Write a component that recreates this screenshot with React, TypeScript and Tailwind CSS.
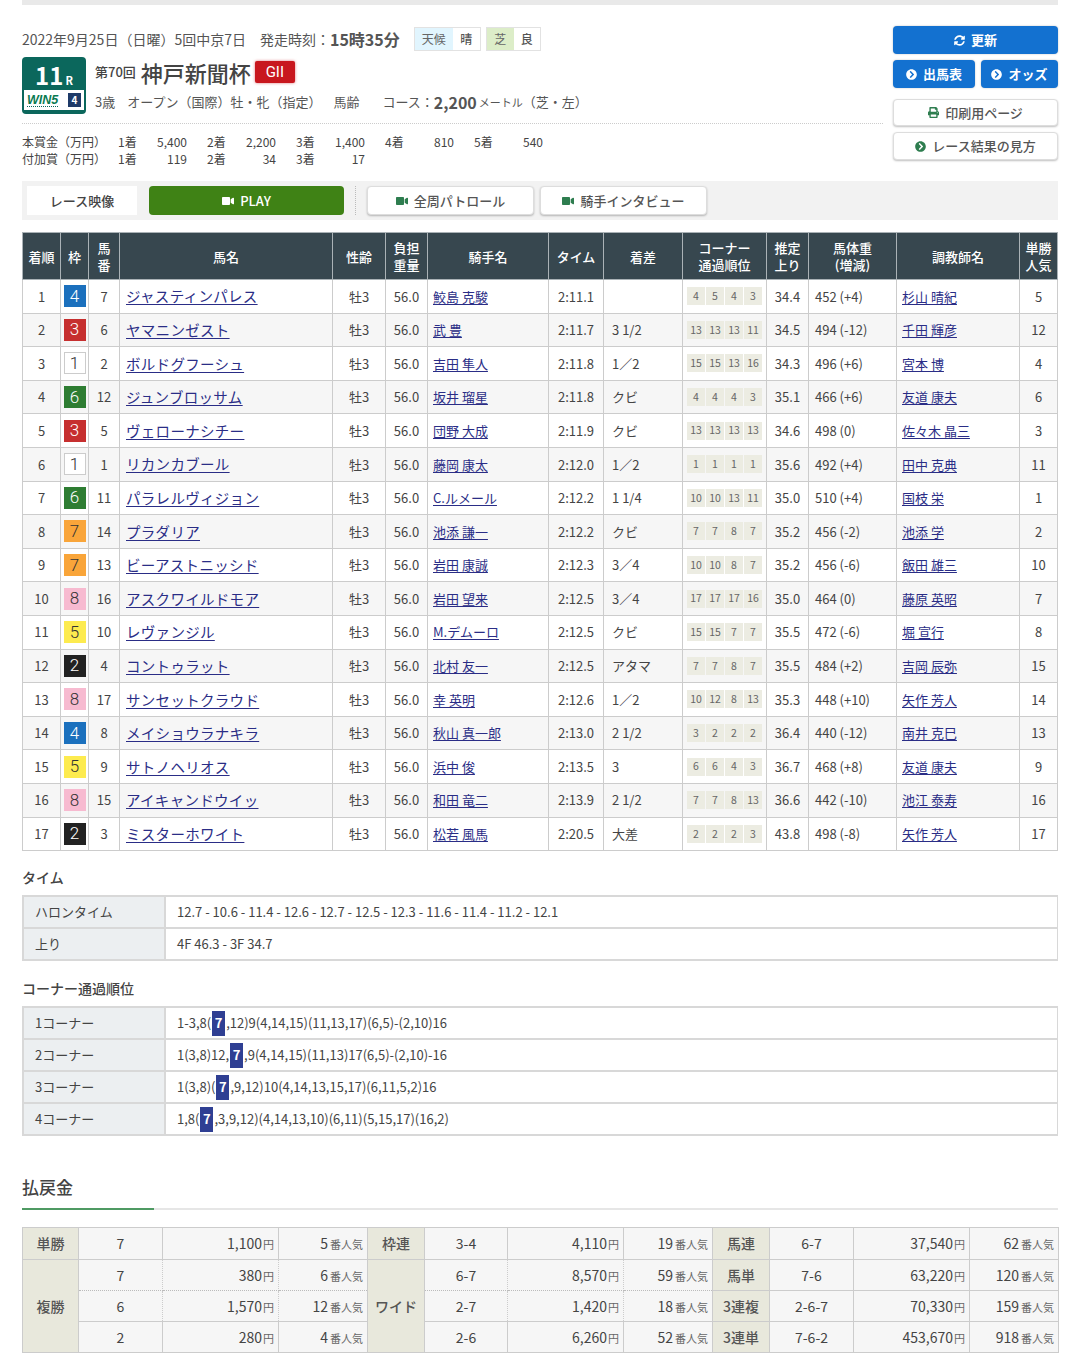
import React from "react";
import { FaVideo, FaSyncAlt, FaChevronCircleRight, FaPrint } from "react-icons/fa";

const FRAME: Record<number, string> = {
  1: "bg-white text-[#333] border border-[#ccc]",
  2: "bg-[#222] text-white",
  3: "bg-[#c62f2f] text-white",
  4: "bg-[#1b70bd] text-white",
  5: "bg-[#fdeb4f] text-[#333]",
  6: "bg-[#2e7d32] text-white",
  7: "bg-[#f9a53a] text-[#333]",
  8: "bg-[#f7bad0] text-[#333]",
};

type Row = [number, number, string, string, string, string, string, string, string, string, string];
const rows: Row[] = [
  [4, 7, "ジャスティンパレス", "鮫島 克駿", "2:11.1", "", "4 5 4 3", "34.4", "452 (+4)", "杉山 晴紀", "5"],
  [3, 6, "ヤマニンゼスト", "武 豊", "2:11.7", "3 1/2", "13 13 13 11", "34.5", "494 (-12)", "千田 輝彦", "12"],
  [1, 2, "ボルドグフーシュ", "吉田 隼人", "2:11.8", "1／2", "15 15 13 16", "34.3", "496 (+6)", "宮本 博", "4"],
  [6, 12, "ジュンブロッサム", "坂井 瑠星", "2:11.8", "クビ", "4 4 4 3", "35.1", "466 (+6)", "友道 康夫", "6"],
  [3, 5, "ヴェローナシチー", "団野 大成", "2:11.9", "クビ", "13 13 13 13", "34.6", "498 (0)", "佐々木 晶三", "3"],
  [1, 1, "リカンカブール", "藤岡 康太", "2:12.0", "1／2", "1 1 1 1", "35.6", "492 (+4)", "田中 克典", "11"],
  [6, 11, "パラレルヴィジョン", "C.ルメール", "2:12.2", "1 1/4", "10 10 13 11", "35.0", "510 (+4)", "国枝 栄", "1"],
  [7, 14, "プラダリア", "池添 謙一", "2:12.2", "クビ", "7 7 8 7", "35.2", "456 (-2)", "池添 学", "2"],
  [7, 13, "ビーアストニッシド", "岩田 康誠", "2:12.3", "3／4", "10 10 8 7", "35.2", "456 (-6)", "飯田 雄三", "10"],
  [8, 16, "アスクワイルドモア", "岩田 望来", "2:12.5", "3／4", "17 17 17 16", "35.0", "464 (0)", "藤原 英昭", "7"],
  [5, 10, "レヴァンジル", "M.デムーロ", "2:12.5", "クビ", "15 15 7 7", "35.5", "472 (-6)", "堀 宣行", "8"],
  [2, 4, "コントゥラット", "北村 友一", "2:12.5", "アタマ", "7 7 8 7", "35.5", "484 (+2)", "吉岡 辰弥", "15"],
  [8, 17, "サンセットクラウド", "幸 英明", "2:12.6", "1／2", "10 12 8 13", "35.3", "448 (+10)", "矢作 芳人", "14"],
  [4, 8, "メイショウラナキラ", "秋山 真一郎", "2:13.0", "2 1/2", "3 2 2 2", "36.4", "440 (-12)", "南井 克巳", "13"],
  [5, 9, "サトノヘリオス", "浜中 俊", "2:13.5", "3", "6 6 4 3", "36.7", "468 (+8)", "友道 康夫", "9"],
  [8, 15, "アイキャンドウイッ", "和田 竜二", "2:13.9", "2 1/2", "7 7 8 13", "36.6", "442 (-10)", "池江 泰寿", "16"],
  [2, 3, "ミスターホワイト", "松若 風馬", "2:20.5", "大差", "2 2 2 3", "43.8", "498 (-8)", "矢作 芳人", "17"],
];

const widths = [38, 28, 31, 213, 53, 42, 121, 55, 79, 84, 42, 88, 123, 38];
const heads = ["着順", "枠", "馬\n番", "馬名", "性齢", "負担\n重量", "騎手名", "タイム", "着差", "コーナー\n通過順位", "推定\n上り", "馬体重\n(増減)", "調教師名", "単勝\n人気"];

function Td({ className = "", children }: { className?: string; children?: React.ReactNode }) {
  return <td className={"border border-[#ccc] p-0 align-middle " + className}>{children}</td>;
}

function ResultTable() {
  return (
    <table className="w-[1036px] table-fixed border-collapse text-[13px] text-[#444]">
      <colgroup>
        {widths.map((w, i) => (
          <col key={i} style={{ width: w }} />
        ))}
      </colgroup>
      <thead>
        <tr className="h-[47px]">
          {heads.map((h, i) => (
            <th key={i} className="whitespace-pre-line border border-[#aab2b6] bg-[#37474f] p-0 text-center text-[13px] font-medium leading-[17px] text-white">
              {h}
            </th>
          ))}
        </tr>
      </thead>
      <tbody>
        {rows.map((r, i) => (
          <tr key={i} className={"h-[33.6px] " + (i % 2 ? "bg-[#f6f6f6]" : "bg-white")}>
            <Td className="text-center">{i + 1}</Td>
            <Td>
              <div className={"mx-auto flex h-[22px] w-[22px] items-center justify-center font-['Roboto',sans-serif] text-[17px] font-light leading-none " + FRAME[r[0]]}>{r[0]}</div>
            </Td>
            <Td className="text-center">{r[1]}</Td>
            <Td className="pl-[6px] text-[14.5px] tracking-[0.3px]">
              <a className="text-[#2a2d86] underline underline-offset-2">{r[2]}</a>
            </Td>
            <Td className="text-center">牡3</Td>
            <Td className="text-center">56.0</Td>
            <Td className="pl-[5px]">
              <a className="text-[#2a2d86] underline underline-offset-2">{r[3]}</a>
            </Td>
            <Td className="text-center">{r[4]}</Td>
            <Td className="pl-[8px]">{r[5]}</Td>
            <Td>
              <div className="flex justify-center gap-[1px]">
                {r[6].split(" ").map((c, j) => (
                  <span key={j} className="flex h-[18px] w-[18px] items-center justify-center bg-[#ecece2] text-[10.5px] leading-none text-[#666]">
                    {c}
                  </span>
                ))}
              </div>
            </Td>
            <Td className="text-center">{r[7]}</Td>
            <Td className="pl-[6px]">{r[8]}</Td>
            <Td className="pl-[5px]">
              <a className="text-[#2a2d86] underline underline-offset-2">{r[9]}</a>
            </Td>
            <Td className="text-center">{r[10]}</Td>
          </tr>
        ))}
      </tbody>
    </table>
  );
}

function InfoRow({ label, h = "h-[32px]", children }: { label: string; h?: string; children: React.ReactNode }) {
  return (
    <div className={"flex border-b-2 border-[#d8d8d8] text-[13px] text-[#444] " + h}>
      <div className="flex w-[144px] shrink-0 items-center border-l-2 border-r-2 border-l-[#d8d8d8] border-r-[#d8d8d8] bg-[#eceff1] pl-[11px]">{label}</div>
      <div className="flex flex-1 items-center border-r border-[#d8d8d8] pl-[11px]">{children}</div>
    </div>
  );
}

function Corner({ a, b }: { a: string; b: string }) {
  return (
    <>
      <span>{a}</span>
      <span className="mx-[1px] flex h-[25px] w-[13px] items-center justify-center bg-[#2f3f93] font-bold text-white">7</span>
      <span>{b}</span>
    </>
  );
}

function Yen({ v }: { v: string }) {
  return (
    <>
      {v}
      <span className="ml-[1px] text-[11px] text-[#666]">円</span>
    </>
  );
}
function Pop({ v }: { v: string }) {
  return (
    <>
      {v}
      <span className="ml-[2px] text-[11px] text-[#666]">番人気</span>
    </>
  );
}

const payWidths = [56, 84, 116, 89, 57, 83, 116, 89, 57, 84, 116, 89];

function PayLabel({ children, rowSpan }: { children: React.ReactNode; rowSpan?: number }) {
  return (
    <td rowSpan={rowSpan} className="border border-[#ccc] bg-[#e8e8dc] p-0 text-center text-[14px] font-medium text-[#555]">
      {children}
    </td>
  );
}
function PayCells({ c, y, p, dashed }: { c: string; y: string; p: string; dashed?: boolean }) {
  const b = "border-x border-x-[#ccc] p-0 " + (dashed ? "border-b border-b-[#bbb] border-dotted border-x-solid " : "border-y border-y-[#ccc] ");
  return (
    <>
      <td className={b + "text-center"}>{c}</td>
      <td className={b + "pr-[4px] text-right"}>
        <Yen v={y} />
      </td>
      <td className={b + "pr-[4px] text-right"}>
        <Pop v={p} />
      </td>
    </>
  );
}

function PayTable() {
  return (
    <table className="w-[1036px] table-fixed border-collapse bg-[#f6f6f6] text-[14px] text-[#444]">
      <colgroup>
        {payWidths.map((w, i) => (
          <col key={i} style={{ width: w }} />
        ))}
      </colgroup>
      <tbody>
        <tr className="h-[32px]">
          <PayLabel>単勝</PayLabel>
          <PayCells c="7" y="1,100" p="5" />
          <PayLabel>枠連</PayLabel>
          <PayCells c="3-4" y="4,110" p="19" />
          <PayLabel>馬連</PayLabel>
          <PayCells c="6-7" y="37,540" p="62" />
        </tr>
        <tr className="h-[31px]">
          <PayLabel rowSpan={3}>複勝</PayLabel>
          <PayCells c="7" y="380" p="6" dashed />
          <PayLabel rowSpan={3}>ワイド</PayLabel>
          <PayCells c="6-7" y="8,570" p="59" dashed />
          <PayLabel>馬単</PayLabel>
          <PayCells c="7-6" y="63,220" p="120" />
        </tr>
        <tr className="h-[31px]">
          <PayCells c="6" y="1,570" p="12" dashed />
          <PayCells c="2-7" y="1,420" p="18" dashed />
          <PayLabel>3連複</PayLabel>
          <PayCells c="2-6-7" y="70,330" p="159" />
        </tr>
        <tr className="h-[31px]">
          <PayCells c="2" y="280" p="4" />
          <PayCells c="2-6" y="6,260" p="52" />
          <PayLabel>3連単</PayLabel>
          <PayCells c="7-6-2" y="453,670" p="918" />
        </tr>
      </tbody>
    </table>
  );
}

function Prize({ place, v }: { place: string; v: string }) {
  return (
    <span className="mr-[20px] flex w-[69px] justify-between">
      <span>{place}</span>
      <span>{v}</span>
    </span>
  );
}

const blueBtn = "flex items-center justify-center gap-[6px] rounded-[4px] bg-[#1371d0] text-[13px] font-bold text-white h-[28px] shadow-[0_0_2px_rgba(0,0,0,0.25)]";
const whiteBtn = "flex items-center justify-center gap-[6px] rounded-[4px] border border-[#ddd] bg-white text-[13px] font-medium text-[#555] shadow-[0_1px_2px_rgba(0,0,0,0.25)]";

export default function App() {
  return (
    <div className="min-h-[1362px] bg-white px-[22px] font-['Noto_Sans_CJK_JP','Noto_Sans',sans-serif] text-[#444]">
      <div className="h-[5px] bg-[#e9e9e9]" />
      <div className="mt-[21px] flex h-[135px]">
        <div className="w-[861px]">
          <div className="flex h-[26px] items-center text-[14px] text-[#555]">
            <span>2022年9月25日（日曜）5回中京7日</span>
            <span className="ml-[14px]">発走時刻：</span>
            <span className="text-[16px] font-bold">15時35分</span>
            <div className="ml-[14px] flex h-[24px] items-center border border-[#e2e2e2] text-[12px]">
              <span className="flex h-full w-[38px] items-center justify-center bg-[#e1f5fe] text-[#666]">天候</span>
              <span className="flex h-full w-[27px] items-center justify-center font-medium">晴</span>
            </div>
            <div className="ml-[5px] flex h-[24px] items-center border border-[#e2e2e2] text-[12px]">
              <span className="flex h-full w-[27px] items-center justify-center bg-[#dcedc8] text-[#666]">芝</span>
              <span className="flex h-full w-[26px] items-center justify-center font-medium">良</span>
            </div>
          </div>
          <div className="mt-[5px] flex">
            <div className="flex h-[57px] w-[64px] shrink-0 flex-col items-center rounded-[4px] bg-[#0b675c] px-[2px] pb-[4px]">
              <div className="flex h-[33px] items-baseline pt-[1px] font-['Noto_Sans_CJK_JP',sans-serif] font-bold leading-[33px] text-white">
                <span className="text-[24px]">11</span>
                <span className="ml-[2px] text-[11px]">R</span>
              </div>
              <div className="flex h-[20px] w-[60px] items-center justify-between bg-white px-[3px]">
                <span className="border-b border-dotted border-[#0b675c] font-['Liberation_Sans',sans-serif] text-[12.5px] font-bold italic leading-[12px] text-[#0b7a52]">WIN5</span>
                <span className="flex h-[14px] w-[13px] items-center justify-center bg-[#1f3a68] text-[10px] font-bold leading-none text-white">4</span>
              </div>
            </div>
            <div className="ml-[9px] flex-1">
              <div className="flex h-[30px] items-center">
                <span className="text-[13px] font-medium">第70回</span>
                <span className="ml-[5px] text-[22px] font-medium leading-none">神戸新聞杯</span>
                <span className="ml-[4px] flex h-[22px] w-[40px] items-center justify-center rounded-[2px] bg-[#c8171e] font-['Roboto',sans-serif] text-[15px] text-white shadow-[0_0_3px_rgba(200,23,30,0.6)]">GII</span>
              </div>
              <div className="mt-[3px] flex h-[24px] items-center text-[13px] text-[#555]">
                <span>3歳</span>
                <span className="ml-[12px]">オープン（国際）牡・牝（指定）</span>
                <span className="ml-[12px]">馬齢</span>
                <span className="ml-[23px]">コース：</span>
                <span className="text-[16px] font-bold">2,200</span>
                <span className="ml-[2px] text-[11px]">メートル</span>
                <span>（芝・左）</span>
              </div>
            </div>
          </div>
          <div className="mt-[9px] border-t border-dotted border-[#ccc]" />
          <div className="mt-[9px] flex h-[17px] items-center text-[12px]">
            <span className="w-[96px]">本賞金（万円）</span>
            <Prize place="1着" v="5,400" />
            <Prize place="2着" v="2,200" />
            <Prize place="3着" v="1,400" />
            <Prize place="4着" v="810" />
            <Prize place="5着" v="540" />
          </div>
          <div className="flex h-[17px] items-center text-[12px]">
            <span className="w-[96px]">付加賞（万円）</span>
            <Prize place="1着" v="119" />
            <Prize place="2着" v="34" />
            <Prize place="3着" v="17" />
          </div>
        </div>
        <div className="ml-[10px] flex w-[165px] flex-col">
          <div className={blueBtn}>
            <FaSyncAlt className="text-[11px]" /> 更新
          </div>
          <div className="mt-[6px] flex gap-[6px]">
            <div className={blueBtn + " w-[82px]"}>
              <FaChevronCircleRight className="text-[11px]" /> 出馬表
            </div>
            <div className={blueBtn + " w-[77px]"}>
              <FaChevronCircleRight className="text-[11px]" /> オッズ
            </div>
          </div>
          <div className={whiteBtn + " mt-[11px] h-[27px] text-[12px]"}>
            <FaPrint className="text-[11px] text-[#2e7d4f]" /> 印刷用ページ
          </div>
          <div className={whiteBtn + " mt-[6px] h-[28px] text-[12px]"}>
            <FaChevronCircleRight className="text-[11px] text-[#2e7d4f]" /> レース結果の見方
          </div>
        </div>
      </div>

      <div className="mt-[20px] flex h-[39px] items-center bg-[#f2f2f2] px-[5px]">
        <div className="flex h-[29px] w-[110px] items-center justify-center bg-white text-[13px] font-medium">レース映像</div>
        <div className="ml-[12px] flex h-[29px] w-[195px] items-center justify-center gap-[6px] rounded-[4px] bg-[#3f8215] text-[13px] font-medium text-white">
          <FaVideo className="text-[12px]" /> PLAY
        </div>
        <div className="ml-[11px] h-[29px] border-l border-dotted border-[#bbb]" />
        <div className={whiteBtn + " ml-[11px] h-[29px] w-[167px]"}>
          <FaVideo className="text-[12px] text-[#2e7d4f]" /> 全周パトロール
        </div>
        <div className={whiteBtn + " ml-[6px] h-[29px] w-[167px]"}>
          <FaVideo className="text-[12px] text-[#2e7d4f]" /> 騎手インタビュー
        </div>
      </div>

      <div className="mt-[12px]">
        <ResultTable />
      </div>

      <h3 className="mt-[17px] h-[19px] text-[14px] font-medium leading-[19px]">タイム</h3>
      <div className="mt-[8px] border-t-2 border-[#d8d8d8]">
        <InfoRow label="ハロンタイム">12.7 - 10.6 - 11.4 - 12.6 - 12.7 - 12.5 - 12.3 - 11.6 - 11.4 - 11.2 - 12.1</InfoRow>
        <InfoRow label="上り">4F 46.3 - 3F 34.7</InfoRow>
      </div>

      <h3 className="mt-[18px] h-[19px] text-[14px] font-medium leading-[19px]">コーナー通過順位</h3>
      <div className="mt-[8px] border-t-2 border-[#d8d8d8]">
        <InfoRow label="1コーナー">
          <Corner a="1-3,8(" b=",12)9(4,14,15)(11,13,17)(6,5)-(2,10)16" />
        </InfoRow>
        <InfoRow label="2コーナー">
          <Corner a="1(3,8)12," b=",9(4,14,15)(11,13)17(6,5)-(2,10)-16" />
        </InfoRow>
        <InfoRow label="3コーナー">
          <Corner a="1(3,8)(" b=",9,12)10(4,14,13,15,17)(6,11,5,2)16" />
        </InfoRow>
        <InfoRow label="4コーナー">
          <Corner a="1,8(" b=",3,9,12)(4,14,13,10)(6,11)(5,15,17)(16,2)" />
        </InfoRow>
      </div>

      <h2 className="mt-[38px] h-[26px] text-[17px] font-medium leading-[26px]">払戻金</h2>
      <div className="mt-[8px] h-[2px] bg-[#e6e6e6]">
        <div className="h-[2px] w-[132px] bg-[#4f9a63]" />
      </div>
      <div className="mt-[17px]">
        <PayTable />
      </div>
    </div>
  );
}
